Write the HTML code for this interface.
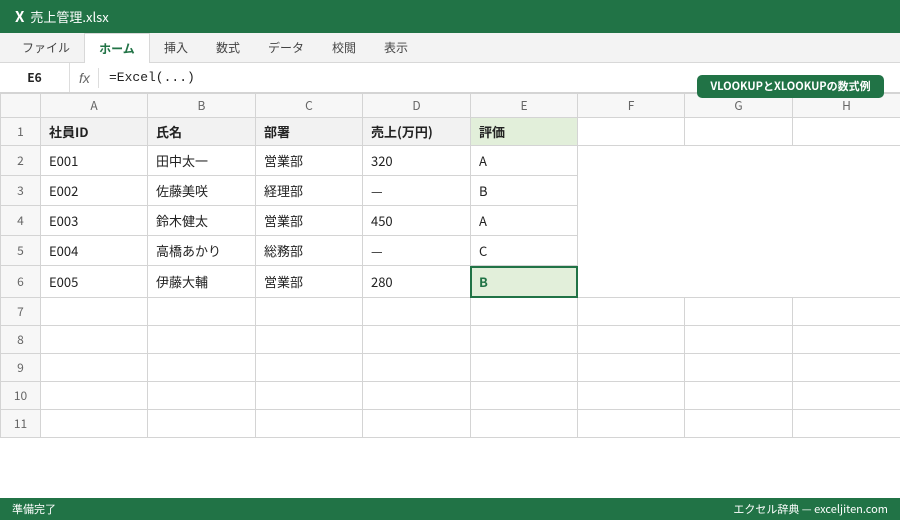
<!DOCTYPE html>
<html><head><meta charset="utf-8"><style>
*{margin:0;padding:0;box-sizing:border-box}
body{width:900px;height:520px;overflow:hidden;background:#fff;font-family:"Noto Sans CJK JP","Liberation Sans",sans-serif;position:relative;color:#222}
.title{position:absolute;left:0;top:0;width:900px;height:33px;background:#217346;color:#fff;font-size:13px;line-height:33px;padding-left:15px}
.title b{font-size:15px;margin-right:6px}
.tabs{position:absolute;top:33px;left:0;width:900px;height:30px;background:#f3f3f3;border-bottom:1px solid #d8d8d8}
.tab{position:absolute;top:0;height:30px;line-height:30px;font-size:12px;color:#444}
.tab.on{background:#fff;border:1px solid #d8d8d8;border-bottom:none;color:#217346;font-weight:bold;height:31px}
.fbar{position:absolute;top:63px;left:0;width:900px;height:30px;background:#fff;border-bottom:1px solid #d4d4d4}
.nm{position:absolute;left:0;top:0;width:70px;height:29px;line-height:29px;text-align:center;font-size:12px;font-weight:bold;border-right:1px solid #ddd}
.fx{position:absolute;left:79px;top:0;line-height:30px;font-size:14px;font-style:italic;color:#666;font-family:"Liberation Sans",sans-serif}
.sep{position:absolute;left:98px;top:5px;width:1px;height:20px;background:#ddd}
.fm{position:absolute;left:109px;top:0;line-height:29px;font-size:13px;font-family:"Liberation Mono",monospace}
table{position:absolute;left:0;top:93px;border-collapse:collapse;table-layout:fixed;width:900px;font-size:13px}
td{border:1px solid #d4d4d4;padding-left:8px;white-space:nowrap;overflow:hidden}
tr.h td{background:#f7f7f7;color:#666;text-align:center;padding:0;font-size:12px;height:24px}
td.r{background:#f7f7f7;color:#666;text-align:center;padding:0;font-size:12px}
tr.b1 td{font-weight:bold;background:#f2f2f2}
tr.b1 td.r{font-weight:normal;background:#f7f7f7}
tr.b1 td.e{background:#e2efda}
tr.b1 td.w{background:#fff}
td.n{border:none;border-top:none}
.sel{position:absolute;left:470px;top:266px;width:108px;height:32px;border:2px solid #217346;background:#e2efda;color:#217346;font-weight:bold;font-size:13px;line-height:28px;padding-left:7px}
.badge{position:absolute;left:697px;top:75px;width:187px;height:23px;background:#217346;color:#fff;border-radius:5px;font-size:11px;font-weight:bold;text-align:center;line-height:23px}
.status{position:absolute;left:0;top:498px;width:900px;height:22px;background:#217346;color:#fff;font-size:11px;line-height:22px;padding:0 12px}
.status span{float:right}
</style></head><body>
<div class="title"><b>X</b>売上管理.xlsx</div>
<div class="tabs">
<div class="tab" style="left:22px">ファイル</div>
<div class="tab on" style="left:84px;width:66px;text-align:center">ホーム</div>
<div class="tab" style="left:164px">挿入</div>
<div class="tab" style="left:216px">数式</div>
<div class="tab" style="left:268px">データ</div>
<div class="tab" style="left:332px">校閲</div>
<div class="tab" style="left:384px">表示</div>
</div>
<div class="fbar"><div class="nm">E6</div><div class="fx">fx</div><div class="sep"></div><div class="fm">=Excel(...)</div></div>
<table>
<colgroup><col style="width:40px"><col style="width:107px"><col style="width:108px"><col style="width:107px"><col style="width:108px"><col style="width:107px"><col style="width:107px"><col style="width:108px"><col style="width:108px"></colgroup>
<tr class="h"><td></td><td>A</td><td>B</td><td>C</td><td>D</td><td>E</td><td>F</td><td>G</td><td>H</td></tr>
<tr class="b1" style="height:28px"><td class="r">1</td><td>社員ID</td><td>氏名</td><td>部署</td><td>売上(万円)</td><td class="e">評価</td><td class="w"></td><td class="w"></td><td class="w"></td></tr>
<tr style="height:30px"><td class="r">2</td><td>E001</td><td>田中太一</td><td>営業部</td><td>320</td><td>A</td><td class="n"></td><td class="n"></td><td class="n"></td></tr>
<tr style="height:30px"><td class="r">3</td><td>E002</td><td>佐藤美咲</td><td>経理部</td><td>—</td><td>B</td><td class="n"></td><td class="n"></td><td class="n"></td></tr>
<tr style="height:30px"><td class="r">4</td><td>E003</td><td>鈴木健太</td><td>営業部</td><td>450</td><td>A</td><td class="n"></td><td class="n"></td><td class="n"></td></tr>
<tr style="height:30px"><td class="r">5</td><td>E004</td><td>高橋あかり</td><td>総務部</td><td>—</td><td>C</td><td class="n"></td><td class="n"></td><td class="n"></td></tr>
<tr style="height:32px"><td class="r">6</td><td>E005</td><td>伊藤大輔</td><td>営業部</td><td>280</td><td>B</td><td class="n"></td><td class="n"></td><td class="n"></td></tr>
<tr style="height:28px"><td class="r">7</td><td></td><td></td><td></td><td></td><td></td><td></td><td></td><td></td></tr>
<tr style="height:28px"><td class="r">8</td><td></td><td></td><td></td><td></td><td></td><td></td><td></td><td></td></tr>
<tr style="height:28px"><td class="r">9</td><td></td><td></td><td></td><td></td><td></td><td></td><td></td><td></td></tr>
<tr style="height:28px"><td class="r">10</td><td></td><td></td><td></td><td></td><td></td><td></td><td></td><td></td></tr>
<tr style="height:28px"><td class="r">11</td><td></td><td></td><td></td><td></td><td></td><td></td><td></td><td></td></tr>
</table>
<div class="sel">B</div>
<div class="badge">VLOOKUPとXLOOKUPの数式例</div>
<div class="status">準備完了<span>エクセル辞典 — exceljiten.com</span></div>
</body></html>
